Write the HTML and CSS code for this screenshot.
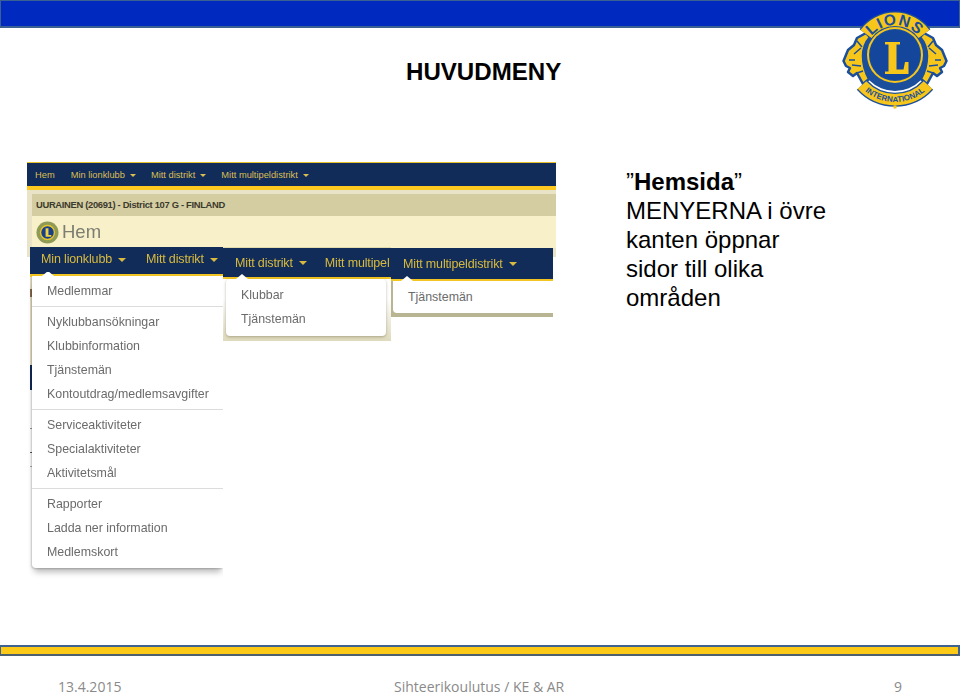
FILE: index.html
```html
<!DOCTYPE html>
<html lang="sv">
<head>
<meta charset="utf-8">
<title>Huvudmeny</title>
<link rel="stylesheet" href="styles.css">
</head>
<body>
<div class="slide">
  <div class="topbar"></div>
  <svg class="logo" viewBox="0 0 130 120" aria-hidden="true">
    <defs>
      <path id="arcTop" d="M35 55 A30 30 0 0 1 95 55"/>
      <path id="arcBottom" d="M18 55 A47 47 0 0 0 112 55"/>
    </defs>
    <circle class="lb" cx="65" cy="55" r="36"/>
    <path class="lion" d="M36 33 L27 38 L24 45 L18 50 L13.500 61 L16 66 L20 68 L18 72 L23 76 L27 73 L33 84 L39 79 Q33 68 33 56 Q33 45 40 37 Z"/>
    <path class="lion" d="M94 33 L103 38 L106 45 L112 50 L116.500 61 L114 66 L110 68 L112 72 L107 76 L103 73 L97 84 L91 79 Q97 68 97 56 Q97 45 90 37 Z"/>
    <path class="ld" d="M24 54 L31 48 M19 60 L25 60 M22 65 L31 66 M27 41 L32 47 M27 73 L33 71"/>
    <path class="ld" d="M106 54 L99 48 M111 60 L105 60 M108 65 L99 66 M103 41 L98 47 M103 73 L97 71"/>
    <path class="band-o" d="M36 34 A36 36 0 0 1 94 34"/>
    <path class="band-o band-o2" d="M32 85 A44.500 44.500 0 0 0 98 85"/>
    <path class="band-y" d="M36 34 A36 36 0 0 1 94 34"/>
    <path class="band-y2" d="M32 85 A44.500 44.500 0 0 0 98 85"/>
    <circle class="ly" cx="65" cy="55" r="28"/>
    <circle class="lb" cx="65" cy="55" r="26"/>
    <circle class="lr" cx="65" cy="55" r="25"/>
    <path class="ly" d="M55 42 H70 V44.500 H66.500 V69.500 H73.500 L75 62 H78.500 V74 H55 V71.500 H58.500 V44.500 H55 Z"/>
    <text class="lt lt-top"><textPath href="#arcTop" startOffset="50%">LIONS</textPath></text>
    <text class="lt lt-bottom"><textPath href="#arcBottom" startOffset="50%">INTERNATIONAL</textPath></text>
    <circle class="ly" cx="65" cy="107" r="1.800"/>
  </svg>

  <main class="main">
    <h1 class="title">HUVUDMENY</h1>
    <div class="content">
      <div class="collage">
        <div class="strip">
          <nav class="strip-nav">
            <span class="n-hem">Hem</span>
            <span class="n-a">Min lionklubb<i class="caret"></i></span>
            <span class="n-b">Mitt distrikt<i class="caret"></i></span>
            <span class="n-c">Mitt multipeldistrikt<i class="caret"></i></span>
          </nav>
          <div class="strip-club">UURAINEN (20691) - District 107 G - FINLAND</div>
          <div class="strip-page">
            <svg class="mini-logo" viewBox="0 0 24 24" aria-hidden="true">
              <circle cx="12" cy="12" r="11.500" fill="#8f9a55"/>
              <circle cx="12" cy="12" r="8" fill="#e7c52c"/>
              <circle cx="12" cy="12" r="6.500" fill="#173f8c"/>
              <path d="M10 7.500h3v7h3v2h-6z" fill="#f0d040"/>
            </svg>
            <span>Hem</span>
          </div>
        </div>
        <div class="panels">
          <section class="panel panel-one">
            <div class="pnav pnav-one"><span>Min lionklubb<i class="caret big"></i></span><span>Mitt distrikt<i class="caret big"></i></span></div>
            <ul class="drop drop-one">
              <li>Medlemmar</li>
              <li class="sep"></li>
              <li>Nyklubbansökningar</li>
              <li>Klubbinformation</li>
              <li>Tjänstemän</li>
              <li>Kontoutdrag/medlemsavgifter</li>
              <li class="sep"></li>
              <li>Serviceaktiviteter</li>
              <li>Specialaktiviteter</li>
              <li>Aktivitetsmål</li>
              <li class="sep"></li>
              <li>Rapporter</li>
              <li>Ladda ner information</li>
              <li>Medlemskort</li>
            </ul>
          </section>
          <section class="panel panel-two">
            <div class="pnav pnav-two"><span>Mitt distrikt<i class="caret big"></i></span><span>Mitt multipel</span></div>
            <ul class="drop drop-two">
              <li>Klubbar</li>
              <li>Tjänstemän</li>
            </ul>
          </section>
          <section class="panel panel-three">
            <div class="pnav pnav-three"><span>Mitt multipeldistrikt<i class="caret big"></i></span></div>
            <ul class="drop drop-three">
              <li>Tjänstemän</li>
            </ul>
          </section>
        </div>
      </div>
      <p class="note">”<b>Hemsida</b>”<br>MENYERNA i övre<br>kanten öppnar<br>sidor till olika<br>områden</p>
    </div>
  </main>

  <div class="rule"></div>
  <footer class="footer">
    <span class="f-date">13.4.2015</span>
    <span class="f-mid">Sihteerikoulutus / KE &amp; AR</span>
    <span class="f-num">9</span>
  </footer>
</div>
</body>
</html>
```

FILE: styles.css
```css
* { box-sizing: border-box; }
html, body { margin: 0; padding: 0; background: #fff; }
.slide {
  position: relative;
  width: 960px;
  height: 696px;
  overflow: hidden;
  display: flex;
  flex-direction: column;
  font-family: "Liberation Sans", Arial, sans-serif;
  color: #000;
}
.topbar {
  height: 28px;
  flex: none;
  background: #0029bf;
  border: 1.500px solid #3a6193;
  border-bottom-width: 2px;
}
.logo {
  position: absolute;
  left: 830px;
  top: 0;
  width: 130px;
  height: 120px;
}
.lb { fill: #1b4f9c; }
.lr { fill: #14479b; }
.ly { fill: #f7c61b; }
.lion { fill: #f7c61b; stroke: #1b4f9c; stroke-width: 2.500; stroke-linejoin: round; }
.ld { fill: none; stroke: #1b4f9c; stroke-width: 1.500; }
.band-o { fill: none; stroke: #1b4f9c; stroke-width: 16px; }
.band-o2 { stroke-width: 14px; }
.band-y { fill: none; stroke: #f7c61b; stroke-width: 13.500px; }
.band-y2 { fill: none; stroke: #f7c61b; stroke-width: 11.500px; }
.lt { fill: #1b4f9c; font-weight: 700; text-anchor: middle; font-family: "Liberation Sans", sans-serif; }
.lt-top { font-size: 15.500px; letter-spacing: 1.200px; }
.lt-bottom { font-size: 8px; }

.main { flex: 1; min-height: 0; display: flex; flex-direction: column; }
.title {
  margin: 30px 0 0 406px;
  font-size: 24.100px;
  line-height: 27px;
  font-weight: 700;
}
.content { display: flex; margin-top: 77px; padding-left: 27px; }
.collage { width: 529px; flex: none; filter: blur(0.45px); }
.note {
  margin: 5px 0 0 70px;
  font-size: 24px;
  line-height: 29px;
}

.strip { height: 95px; background: #e9e4c8; padding-left: 5px; }
.strip-nav {
  height: 28px;
  margin-left: -5px;
  background: #122c5a;
  border-top: 1px solid #e8c22c;
  border-bottom: 4px solid #fdc820;
  color: #d9bf52;
  font-size: 9.300px;
  display: flex;
  align-items: center;
  padding-left: 8px;
  white-space: nowrap;
}
.n-a { margin-left: 16px; }
.n-b { margin-left: 15px; }
.n-c { margin-left: 15px; }
.caret {
  display: inline-block;
  vertical-align: middle;
  margin-left: 5px;
  border-left: 3px solid transparent;
  border-right: 3px solid transparent;
  border-top: 3px solid currentColor;
}
.caret.big { border-left-width: 4px; border-right-width: 4px; border-top-width: 4px; margin-left: 6px; }
.strip-club {
  margin-top: 4px;
  height: 22px;
  background: #d5cda2;
  color: #3c3a2c;
  font-size: 9.400px;
  letter-spacing: -0.320px;
  font-weight: 700;
  line-height: 22px;
  padding-left: 4px;
  white-space: nowrap;
}
.strip-page {
  height: 32px;
  background: #f7f0c9;
  display: flex;
  align-items: center;
  gap: 3px;
  padding-left: 4px;
  color: #7d7d72;
  font-size: 18.500px;
}
.mini-logo { width: 23px; height: 23px; }

.panels { display: flex; align-items: flex-start; margin-top: -10px; padding-left: 3px; }
.panel { flex: none; }
.pnav {
  display: flex;
  align-items: center;
  background: #122c5a;
  color: #d8bb3e;
  font-size: 12.500px;
  letter-spacing: -0.150px;
  white-space: nowrap;
  border-bottom: 2px solid #f2c522;
}
.panel-one {
  width: 193px;
  background:
    linear-gradient(#fdc820 0 30px, #e8e2c4 30px 42px, #8a6a4a 42px 50px, #e8e2c4 50px 118px, #122c5a 118px 143px, #fff 143px 181px, #999 181px 182px, #fff 182px 205px, #555 205px 206px, #fff 206px 219px, #aaa 219px 220px, #fff 220px) no-repeat 0 0 / 2px 100%;
}
.pnav-one { height: 29px; padding: 0 0 3px 11px; gap: 20px; }
.panel-two {
  width: 168px;
  background: linear-gradient(#fff 55%, #dfdabd);
}
.pnav-two {
  height: 32px;
  padding-left: 12px;
  border-top: 1px solid #e2d9ac;
  gap: 18px;
}
.panel-three { width: 162px; margin-top: 1px; background: #b9b491; }
.pnav-three { height: 33px; padding-left: 12px; }

.drop {
  list-style: none;
  margin: 0;
  position: relative;
  background: #fff;
  color: #6b6b6b;
  font-size: 12.400px;
}
.drop::before {
  content: "";
  position: absolute;
  top: -5px;
  border-left: 6px solid transparent;
  border-right: 6px solid transparent;
  border-bottom: 5px solid #fff;
}
.drop li { height: 24px; line-height: 24px; padding-left: 15px; white-space: nowrap; }
.drop li.sep { height: 1px; margin: 3px 0; padding: 0; background: #dcdcdc; }
.drop-one {
  margin: 0 0 12px 2px;
  padding: 3px 0;
  height: 292px;
  border-radius: 0 0 0 4px;
  box-shadow: -1px 1px 2px rgba(0,0,0,.18), 0 6px 6px -2px rgba(0,0,0,.28);
  clip-path: inset(-4px 0 -12px -4px);
}
.drop-one::before { left: 10px; }
.drop-two {
  margin: 0 5px 5px 3px;
  padding: 4px 0;
  height: 57px;
  border-radius: 4px;
  box-shadow: 0 1px 3px rgba(60,50,10,.35);
}
.drop-two::before { left: 10px; }
.drop-three {
  margin: 0 0 4px 2px;
  padding: 4px 0;
  height: 32px;
  border-radius: 0 0 0 4px;
}
.drop-three::before { left: 8px; }

.rule {
  flex: none;
  height: 11px;
  margin-bottom: 22px;
  background: #fcc916;
  border: 2px solid #3f6390;
  border-bottom-color: #4c5f6e;
  border-left-width: 1.500px;
}
.footer {
  height: 18px;
  flex: none;
  display: grid;
  grid-template-columns: 394px 500px 1fr;
  color: #8a8a8a;
  font-family: "Open Sans", sans-serif;
  font-size: 14px;
  line-height: 17px;
}
.f-date { padding-left: 58px; }
```
